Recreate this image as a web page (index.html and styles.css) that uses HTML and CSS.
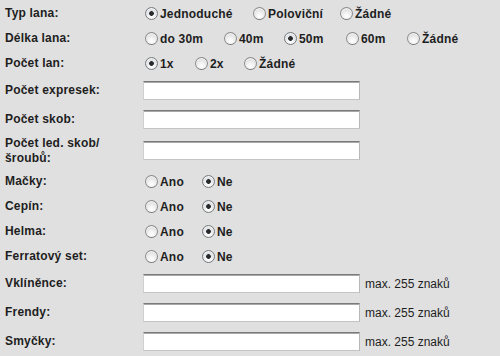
FILE: index.html
```html
<!DOCTYPE html>
<html lang="cs">
<head>
    <meta charset="UTF-8">
    <title>Vybavení</title>
    <link rel="stylesheet" href="styles.css">
</head>
<body>
    <form class="gear">
        <div class="row radio-row typ">
            <span class="label">Typ lana:</span>
            <label class="opt"><input type="radio" name="typ" checked>Jednoduché</label>
            <label class="opt"><input type="radio" name="typ">Poloviční</label>
            <label class="opt"><input type="radio" name="typ">Žádné</label>
        </div>
        <div class="row radio-row delka">
            <span class="label">Délka lana:</span>
            <label class="opt"><input type="radio" name="delka">do 30m</label>
            <label class="opt"><input type="radio" name="delka">40m</label>
            <label class="opt"><input type="radio" name="delka" checked>50m</label>
            <label class="opt"><input type="radio" name="delka">60m</label>
            <label class="opt"><input type="radio" name="delka">Žádné</label>
        </div>
        <div class="row radio-row pocet">
            <span class="label">Počet lan:</span>
            <label class="opt"><input type="radio" name="pocet" checked>1x</label>
            <label class="opt"><input type="radio" name="pocet">2x</label>
            <label class="opt"><input type="radio" name="pocet">Žádné</label>
        </div>

        <div class="row text-row">
            <span class="label">Počet expresek:</span>
            <input type="text" class="field">
        </div>
        <div class="row text-row">
            <span class="label">Počet skob:</span>
            <input type="text" class="field">
        </div>
        <div class="row text-row tall">
            <span class="label">Počet led. skob/<br>šroubů:</span>
            <input type="text" class="field">
        </div>

        <!-- ano / ne -->
        <div class="row radio-row yesno">
            <span class="label">Mačky:</span>
            <label class="opt"><input type="radio" name="macky">Ano</label>
            <label class="opt"><input type="radio" name="macky" checked>Ne</label>
        </div>
        <div class="row radio-row yesno">
            <span class="label">Cepín:</span>
            <label class="opt"><input type="radio" name="cepin">Ano</label>
            <label class="opt"><input type="radio" name="cepin" checked>Ne</label>
        </div>
        <div class="row radio-row yesno">
            <span class="label">Helma:</span>
            <label class="opt"><input type="radio" name="helma">Ano</label>
            <label class="opt"><input type="radio" name="helma" checked>Ne</label>
        </div>
        <div class="row radio-row yesno">
            <span class="label">Ferratový set:</span>
            <label class="opt"><input type="radio" name="ferrata">Ano</label>
            <label class="opt"><input type="radio" name="ferrata" checked>Ne</label>
        </div>

        <div class="row text-row">
            <span class="label">Vklíněnce:</span>
            <input type="text" class="field">
            <span class="hint">max. 255 znaků</span>
        </div>
        <div class="row text-row">
            <span class="label">Frendy:</span>
            <input type="text" class="field">
            <span class="hint">max. 255 znaků</span>
        </div>
        <div class="row text-row">
            <span class="label">Smyčky:</span>
            <input type="text" class="field">
            <span class="hint">max. 255 znaků</span>
        </div>
    </form>
</body>
</html>
```

FILE: styles.css
```css
body {
    margin: 0;
    background: #e0e0e0;
    color: #1e1e1e;
    font-family: "Liberation Sans", Arial, sans-serif;
    font-size: 12px;
}
.gear {
    padding: 1px 0 0 5px;
}
.row {
    display: flex;
    align-items: center;
}
.radio-row {
    height: 25px;
}
.text-row {
    height: 29px;
}
.text-row.tall {
    height: 33px;
    margin-bottom: 2px;
}
.label {
    width: 138px;
    flex: none;
    font-weight: bold;
    letter-spacing: 0.2px;
    line-height: 15px;
}
.opt {
    display: flex;
    align-items: center;
    font-weight: bold;
    letter-spacing: 0.2px;
    flex: none;
}
.opt input {
    appearance: none;
    -webkit-appearance: none;
    width: 13px;
    height: 13px;
    margin: 0 2px 0 2px;
    border: 1px solid #8c8c8c;
    border-bottom-color: #777;
    border-radius: 50%;
    background: radial-gradient(circle at 50% 75%, #ffffff 0, #f2f2f2 35%, #cfcfcf 100%);
    box-shadow: inset 0 1px 1px rgba(255, 255, 255, 0.9);
}
.opt input:checked {
    background:
        radial-gradient(circle, #2a2a2a 0, #2a2a2a 2px, transparent 2.7px),
        radial-gradient(circle at 50% 75%, #ffffff 0, #eef1f4 35%, #c6ccd2 100%);
    border-color: #7a7a7a;
}
.typ .opt:nth-of-type(1) { width: 108px; }
.typ .opt:nth-of-type(2) { width: 87px; }
.delka .opt:nth-of-type(1) { width: 79px; }
.delka .opt:nth-of-type(2) { width: 60px; }
.delka .opt:nth-of-type(3) { width: 62px; }
.delka .opt:nth-of-type(4) { width: 61px; }
.pocet .opt:nth-of-type(1) { width: 50px; }
.pocet .opt:nth-of-type(2) { width: 49px; }
.yesno .opt:nth-of-type(1) { width: 57px; }

.field {
    box-sizing: border-box;
    width: 217px;
    height: 19px;
    margin: 0;
    padding: 0 3px;
    background: #fff;
    border: 1px solid #c4c4c4;
    border-top-color: #7a7a7a;
    border-right-color: #b8b8b8;
    border-left-color: #d0d0d0;
    box-shadow: inset 0 1px 0 #a8a8a8;
    font: 12px "Liberation Sans", Arial, sans-serif;
    outline: none;
}
.hint {
    margin-left: 5px;
}
```
